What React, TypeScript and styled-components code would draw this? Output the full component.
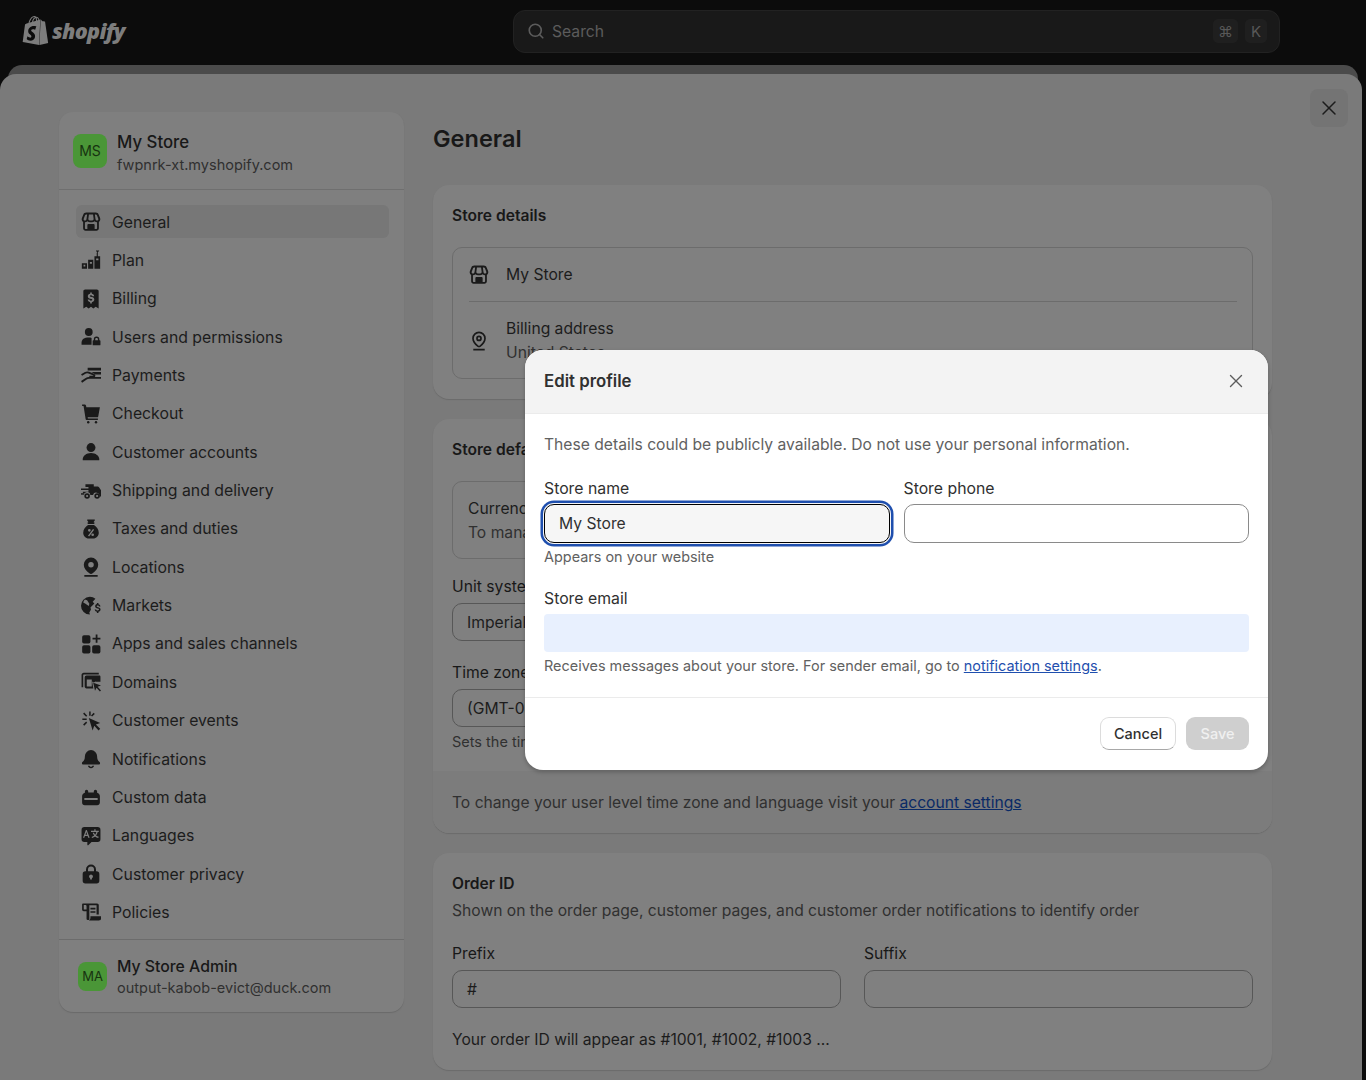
import React from 'react';
import styled, { createGlobalStyle } from 'styled-components';
import { SiShopify } from 'react-icons/si';
import { Search, X } from 'lucide-react';

const GlobalStyle = createGlobalStyle`
  * { box-sizing: border-box; }
  html, body { margin: 0; padding: 0; background: #0c0c0c; }
  body { font-family: Inter, "Noto Sans", sans-serif; color: #181818; }
`;

const Page = styled.div`
  position: relative;
  width: 1366px;
  height: 1080px;
  overflow: hidden;
  display: flex;
  flex-direction: column;
`;

const TopBar = styled.header`
  height: 65px;
  flex: none;
  display: flex;
  align-items: center;
  padding: 0 86px 2px 21px;
`;

const Logo = styled.div`
  width: 492px;
  margin-bottom: 2px;
  display: flex;
  align-items: center;
  gap: 2px;
  color: #7d7d7d;
`;

const LogoWord = styled.span`
  font-family: "Open Sans", sans-serif;
  font-style: italic;
  font-weight: 800;
  font-size: 21.5px;
  letter-spacing: -0.7px;
`;

const SearchBar = styled.div`
  width: 767px;
  height: 43px;
  display: flex;
  align-items: center;
  gap: 7px;
  padding: 0 12px 1px 13px;
  background: #191919;
  border: 1px solid #222;
  border-radius: 12px;
  color: #5c5c5c;
  font-size: 15.7px;
`;

const SearchText = styled.span`
  flex: 1;
`;

const Key = styled.kbd<{ $wide?: boolean }>`
  display: flex;
  align-items: center;
  justify-content: center;
  width: ${p => (p.$wide ? '25px' : '22px')};
  height: 24px;
  border-radius: 5px;
  background: #1f1f1f;
  color: #585858;
  font-family: Inter, "DejaVu Sans", sans-serif;
  font-size: 15px;
`;

const BackSheet = styled.div`
  flex: none;
  height: 24px;
  margin: 0 8px -15px;
  border-radius: 14px 14px 0 0;
  background: #4b4b4b;
`;

const Sheet = styled.main`
  position: relative;
  flex: 1;
  min-height: 0;
  margin-right: 4px;
  padding: 38px 0 0 59px;
  display: flex;
  align-items: flex-start;
  gap: 29px;
  overflow: hidden;
  border-radius: 16px 16px 0 0;
  background: #7a7a7a;
`;

const SheetClose = styled.button`
  position: absolute;
  top: 15px;
  right: 14px;
  width: 38px;
  height: 38px;
  padding: 0;
  display: flex;
  align-items: center;
  justify-content: center;
  border: 0;
  border-radius: 8px;
  background: #747474;
  color: #1c1c1c;
`;

const Sidebar = styled.aside`
  width: 345px;
  height: 900px;
  flex: none;
  display: flex;
  flex-direction: column;
  border-radius: 14px;
  background: #7f7f7f;
  box-shadow: 0 1px 1px #6a6a6a;
`;

const Account = styled.div<{ $footer?: boolean }>`
  display: flex;
  align-items: center;
  gap: 10px;
  height: ${p => (p.$footer ? '73px' : '78px')};
  padding-left: ${p => (p.$footer ? '19px' : '14px')};
  ${p => (p.$footer ? 'border-top: 1px solid #6c6c6c;' : 'border-bottom: 1px solid #6f6f6f;')}
`;

const Avatar = styled.div<{ $small?: boolean }>`
  width: ${p => (p.$small ? '29px' : '34px')};
  height: ${p => (p.$small ? '29px' : '34px')};
  flex: none;
  display: flex;
  align-items: center;
  justify-content: center;
  border-radius: 8px;
  background: #4a9637;
  color: #173310;
  font-size: ${p => (p.$small ? '13px' : '14px')};
`;

const AccountText = styled.div<{ $footer?: boolean }>`
  display: flex;
  flex-direction: column;
  gap: ${p => (p.$footer ? '0' : '2px')};
  margin-top: ${p => (p.$footer ? '2px' : '5px')};
`;

const AccountName = styled.span<{ $footer?: boolean }>`
  font-size: ${p => (p.$footer ? '15.8px' : '16.8px')};
  line-height: 22px;
  font-weight: 500;
  color: #181818;
`;

const AccountMeta = styled.span`
  font-size: 14.5px;
  line-height: 20px;
  color: #303030;
`;

const Nav = styled.nav`
  flex: 1;
  display: flex;
  flex-direction: column;
  gap: 5.36px;
  padding: 15px 15px 0 17px;
`;

const NavItem = styled.a<{ $active?: boolean }>`
  display: flex;
  align-items: center;
  gap: 11px;
  height: 33px;
  padding: 1px 0 0 5px;
  border-radius: 6px;
  font-size: 15.8px;
  color: #1c1c1c;
  background: ${p => (p.$active ? '#777' : 'transparent')};
`;

const Icon = styled.svg`
  width: 20px;
  height: 20px;
  flex: none;
  fill: #1a1a1a;
  stroke: none;
`;

const Content = styled.div`
  width: 839px;
  flex: none;
  display: flex;
  flex-direction: column;
  gap: 20px;
`;

const PageTitle = styled.h1`
  height: 53px;
  margin: 0;
  padding-top: 11px;
  font-size: 23.5px;
  line-height: 32px;
  font-weight: 600;
  color: #181818;
`;

const Card = styled.section`
  border-radius: 16px;
  background: #808080;
  box-shadow: 0 1px 1px #6b6b6b;
  overflow: hidden;
`;

const CardBody = styled.div<{ $bottom: number }>`
  padding: 19px 19px ${p => p.$bottom}px;
`;

const CardTitle = styled.h2`
  margin: 0;
  font-size: 15.6px;
  line-height: 24px;
  font-weight: 600;
  color: #181818;
`;

const CardText = styled.p<{ $muted?: boolean; $small?: boolean }>`
  margin: 0;
  font-size: ${p => (p.$small ? '14.5px' : '15.65px')};
  line-height: 24px;
  color: ${p => (p.$muted ? '#303030' : '#1c1c1c')};
`;

const Description = styled(CardText)`
  margin-top: 3px;
`;

const HelpLine = styled(CardText)`
  margin-top: 3px;
`;

const InsetBox = styled.div`
  margin-top: 19px;
  padding: 0 15px 0 16px;
  border: 1px solid #6c6c6c;
  border-radius: 10px;
`;

const InsetRow = styled.div<{ $tall?: boolean; $divider?: boolean }>`
  display: flex;
  align-items: center;
  gap: 17px;
  padding-top: 1px;
  height: ${p => (p.$tall ? '76px' : '54px')};
  ${p => p.$divider && 'border-bottom: 1px solid #6c6c6c;'}
`;

const Stack = styled.div`
  display: flex;
  flex-direction: column;
`;

const CurrencyBox = styled.div`
  margin-top: 19px;
  height: 78px;
  padding: 15px 15px 0;
  border: 1px solid #6c6c6c;
  border-radius: 10px;
`;

const Field = styled.div<{ $gap: number }>`
  display: flex;
  flex-direction: column;
  margin-top: ${p => p.$gap}px;
`;

const FieldLabel = styled.label`
  font-size: 15.7px;
  line-height: 24px;
  margin-bottom: 4px;
  color: #181818;
`;

const GhostInput = styled.div`
  height: 38px;
  display: flex;
  align-items: center;
  padding: 0 14px;
  border: 1px solid #575757;
  border-radius: 10px;
  font-size: 15.7px;
  color: #1c1c1c;
`;

const CardFooter = styled.div`
  height: 62px;
  display: flex;
  align-items: center;
  padding: 2px 19px 0;
  background: #7c7c7c;
`;

const DimLink = styled.a`
  color: #0a2a66;
  text-decoration: underline;
`;

const FieldGrid = styled.div`
  display: grid;
  grid-template-columns: 389px 389px;
  gap: 23px;
`;

const Modal = styled.div`
  position: absolute;
  top: 350px;
  left: 525px;
  width: 743px;
  height: 420px;
  display: flex;
  flex-direction: column;
  overflow: hidden;
  border-radius: 18px;
  background: #fff;
  box-shadow: 0 2px 4px rgba(0, 0, 0, 0.25);
`;

const ModalHeader = styled.div`
  height: 64px;
  flex: none;
  display: flex;
  align-items: center;
  justify-content: space-between;
  padding: 0 21px 2px 19px;
  background: #f3f3f3;
  border-bottom: 1px solid #ebebeb;
`;

const ModalTitle = styled.h2`
  margin: 0;
  font-size: 16.8px;
  font-weight: 600;
  color: #303030;
`;

const ModalBody = styled.div`
  flex: 1;
  padding: 19px 19px 0;
  display: flex;
  flex-direction: column;
`;

const Lead = styled.p`
  margin: 0 0 20px;
  font-size: 15.65px;
  line-height: 24px;
  color: #616161;
`;

const TwoCol = styled.div`
  display: grid;
  grid-template-columns: 1fr 1fr;
  column-gap: 14px;
`;

const ModalLabel = styled.label`
  display: block;
  height: 24px;
  margin-bottom: 3px;
  font-size: 15.8px;
  line-height: 24px;
  color: #303030;
`;

const TextBox = styled.input<{ $focused?: boolean }>`
  width: 100%;
  height: 39px;
  padding: 0 14px;
  outline: none;
  font-family: inherit;
  font-size: 15.7px;
  color: #303030;
  border-radius: 10px;
  background: ${p => (p.$focused ? '#f6f6f6' : '#fff')};
  border: 1px solid ${p => (p.$focused ? '#000' : '#8a8a8a')};
  ${p => p.$focused && 'box-shadow: 0 0 0 1px #f6f6f6, 0 0 0 3.5px #1f4fae;'}
`;

const EmailBox = styled.input`
  width: 100%;
  height: 38px;
  display: block;
  margin-top: 3px;
  border: 0;
  outline: none;
  border-radius: 4px;
  background: #e8f0fe;
`;

const Help = styled.div`
  font-size: 14.45px;
  line-height: 20px;
  margin-top: 4px;
  color: #616161;
`;

const ModalLink = styled.a`
  color: #1f4fae;
  text-decoration: underline;
`;

const EmailField = styled.div`
  margin-top: 20px;
`;

const ModalFooter = styled.div`
  height: 73px;
  flex: none;
  display: flex;
  align-items: center;
  justify-content: flex-end;
  gap: 10px;
  padding: 0 19px 2px;
  border-top: 1px solid #ebebeb;
`;

const Button = styled.button<{ $primary?: boolean }>`
  height: 33px;
  padding: 0;
  font-family: inherit;
  font-size: 14.5px;
  font-weight: 500;
  border-radius: 9px;
  ${p =>
    p.$primary
      ? 'border: 0; background: #cfcfcf; color: #f0f0f0; width: 63px;'
      : 'border: 1px solid #dcdcdc; border-bottom-color: #a8a8a8; background: #fff; color: #303030; width: 76px;'}
`;

const ModalClose = styled.span`
  display: flex;
  color: #5c5c5c;
`;

const StoreIcon = () => (
  <Icon viewBox="2 2 16 16.500">
    <path fillRule="evenodd" d="M6 2.500h8c1 0 1.900.6 2.300 1.500l1.200 3c.5 1.400-.1 2.600-1 3.200v5.300c0 1.100-.9 2-2 2h-9c-1.100 0-2-.9-2-2v-5.300c-.9-.6-1.500-1.800-1-3.200l1.200-3C4.100 3.100 5 2.500 6 2.500ZM6 4c-.4 0-.7.200-.9.600L4 7.500c-.3.800.3 1.500 1 1.500.8 0 1.300-.6 1.300-1.300L6.800 4H6Zm2.300 0-.5 3.700c0 .8.900 1.300 2.200 1.300s2.200-.5 2.200-1.300L11.700 4H8.300Zm4.900 0 .5 3.700c0 .7.500 1.300 1.300 1.300.7 0 1.300-.7 1-1.500l-1.100-2.900c-.2-.4-.5-.6-.9-.6h-.8ZM5 10.500v5c0 .3.200.5.500.5H7v-3c0-.6.400-1 1-1h4c.6 0 1 .4 1 1v3h1.500c.3 0 .5-.2.500-.5v-5c-.8 0-1.500-.3-2-.9-.7.600-1.800.9-3 .9s-2.300-.3-3-.9c-.5.600-1.200.9-2 .9Z" />
  </Icon>
);

const PinOutlineIcon = () => (
  <Icon viewBox="2 1.500 16 17.500">
    <path fillRule="evenodd" d="M10 2a6 6 0 0 1 6 6c0 2.700-2 5.400-4.500 7.300-.9.700-2.100.7-3 0C6 13.400 4 10.700 4 8a6 6 0 0 1 6-6Zm0 1.500A4.500 4.500 0 0 0 5.500 8c0 2 1.600 4.300 3.900 6.100.4.300.8.300 1.200 0C12.900 12.300 14.500 10 14.500 8A4.500 4.500 0 0 0 10 3.500Zm0 2a2.500 2.500 0 1 1 0 5 2.500 2.500 0 0 1 0-5ZM10 7a1 1 0 1 0 0 2 1 1 0 0 0 0-2ZM5 17h10v1.500H5z" />
  </Icon>
);

const icons: Record<string, React.ReactNode> = {
  store: <StoreIcon />,
  plan: (
    <Icon viewBox="1.500 1 17 17.500">
      <path d="M14.200 1.500h3l-1.500 2.200zM15 3.500h1v3h-1zM13 6.500h5v11h-5zM7.500 9.500H12v8H7.500zM2 12.500h4.500v5H2z" />
      <path d="M14.500 8.500h2V10h-2zM9 11.500h1.800V13H9zM3.500 14H5v1.500H3.500z" fill="#808080" />
    </Icon>
  ),
  billing: (
    <Icon viewBox="1.500 1.500 17 17">
      <path fillRule="evenodd" d="M5 2h10c.8 0 1.500.7 1.500 1.500V18L14 16.500 12 18l-2-1.500L8 18l-2-1.500L3.500 18V3.500C3.500 2.700 4.200 2 5 2Zm4.300 2.500v1.100c-1.200.2-2 1-2 2.100 0 1.200.9 1.800 2 2.100l1.100.3c.5.100.7.3.7.6 0 .4-.4.7-1.100.7-.8 0-1.200-.3-1.300-.9H7.200c.1 1.200.9 2 2.100 2.200v1.100h1.400v-1.100c1.300-.2 2.100-1 2.100-2.200 0-1.200-.9-1.800-2-2.100l-1.100-.3c-.5-.1-.7-.3-.7-.6 0-.4.400-.7 1-.7.700 0 1.100.3 1.200.8h1.500c-.1-1.100-.9-1.900-2-2.100V4.500H9.300Z" />
    </Icon>
  ),
  users: (
    <Icon viewBox="1 1.500 18 17">
      <circle cx="8" cy="5.500" r="3.500" />
      <path d="M1.500 17v-2c0-2.800 2.500-4.500 6.500-4.500 1 0 1.800.1 2.500.3V17z" />
      <path fillRule="evenodd" d="M15 9.500a2.500 2.500 0 0 1 2.500 2.500v1h.5c.3 0 .5.200.5.500V17c0 .3-.2.500-.5.500h-6a.5.500 0 0 1-.5-.5v-3.500c0-.3.200-.5.500-.5h.5v-1A2.500 2.500 0 0 1 15 9.500Zm0 1.300c-.7 0-1.200.5-1.200 1.200v1h2.400v-1c0-.7-.5-1.200-1.200-1.200Z" />
    </Icon>
  ),
  payments: (
    <Icon viewBox="1 1.500 18 17">
      <path d="M7 3.500h12V6H7zM10.500 7.200H19v2.300h-5z" />
      <path d="M1.500 10 5 8c1-.5 2-.5 3-.1l4.500 1.700c1 .4.700 1.900-.4 1.900H8.500" fill="none" stroke="#1a1a1a" strokeWidth="1.700" />
      <path d="M1.500 16.200 6 13.200c.7-.5 1.400-.6 2.200-.6H19" fill="none" stroke="#1a1a1a" strokeWidth="1.700" />
    </Icon>
  ),
  cart: (
    <Icon viewBox="1 1.500 18 18">
      <path d="M2 2h2.300c.6 0 1 .4 1.200.9l.3 1.600H18l-1.500 8.200c-.1.500-.5.800-1 .8H7l.2 1h9v1.300H6c-.4 0-.7-.3-.8-.6L3.300 3.300H2z" />
      <circle cx="7.500" cy="18" r="1.100" />
      <circle cx="14.500" cy="18" r="1.100" />
    </Icon>
  ),
  person: (
    <Icon viewBox="1 1 18 18">
      <circle cx="10" cy="6" r="4" />
      <path d="M3 17.500c-.3 0-.5-.2-.5-.5 0-3.500 3.300-6 7.500-6s7.500 2.500 7.500 6c0 .3-.2.500-.5.500z" />
    </Icon>
  ),
  shipping: (
    <Icon viewBox="1 1.500 18 17">
      <path fillRule="evenodd" d="M5 4h7.500v2H16c.5 0 .9.200 1.200.6l2 3c.2.200.3.500.3.800V14c0 .6-.4 1-1 1h-.9a3 3 0 0 0-5.800-1.500H9.400A3 3 0 0 0 6.500 11c-.7 0-1.200.2-1.800.6V12h-2v-1.300h5V9.200h-7V7.700h7V6.300H5z" />
      <path fillRule="evenodd" d="M6.500 12a2.500 2.500 0 1 1 0 5 2.500 2.500 0 0 1 0-5Zm0 1.500a1 1 0 1 0 0 2 1 1 0 0 0 0-2ZM15.500 12a2.500 2.500 0 1 1 0 5 2.500 2.500 0 0 1 0-5Zm0 1.500a1 1 0 1 0 0 2 1 1 0 0 0 0-2Z" />
      <path d="M1 12h2.800v1.300H1z" />
    </Icon>
  ),
  taxes: (
    <Icon viewBox="1.500 1 17 18">
      <path fillRule="evenodd" d="M7 1.500h6c.4 0 .6.500.4.800L12.200 4h.8v1.500H7V4h.8L6.600 2.300c-.2-.3 0-.8.400-.8Zm.3 5h5.400C15 8 17 10.500 17 13.300c0 2.800-2.200 5.200-5 5.200H8c-2.800 0-5-2.400-5-5.200C3 10.500 5 8 7.300 6.500Zm4.500 3.500-4.500 6 1 .7 4.500-6ZM8.500 10a1.200 1.200 0 1 0 0 2.400 1.200 1.200 0 0 0 0-2.400Zm3 4a1.200 1.200 0 1 0 0 2.400 1.200 1.200 0 0 0 0-2.400Z" />
    </Icon>
  ),
  location: (
    <Icon viewBox="1 1 18 18">
      <path fillRule="evenodd" d="M10 1.500A6.500 6.500 0 0 1 16.500 8c0 3-2.300 5.700-5 7.700-.9.700-2.100.7-3 0-2.700-2-5-4.700-5-7.700A6.500 6.500 0 0 1 10 1.500Zm0 4a2.500 2.500 0 1 0 0 5 2.500 2.500 0 0 0 0-5ZM4 17.300h12v1.400H4z" />
    </Icon>
  ),
  markets: (
    <Icon viewBox="1 1.500 18 17.500">
      <path d="M9 2a8 8 0 0 1 5 1.800L11.500 6.500 13 8l-3.500 3.500.5 2-1.500 2.500.5 2H9A8 8 0 0 1 9 2ZM3 7c1 .5 2.500 1 3 2l2 1.200.5-2L6.500 5l-2-.5C3.800 5.200 3.300 6 3 7Z" />
      <path d="M15.300 7.500h1.400v1.100c1 .2 1.800 1 1.800 2h-1.400c0-.4-.5-.8-1-.8-.6 0-1 .3-1 .7 0 .5.500.6 1.200.8 1.200.3 2.300.7 2.300 2.100 0 1-.7 1.800-1.900 2v1.100h-1.400v-1.100c-1.100-.2-1.900-1-2-2.100h1.400c.1.500.6.900 1.300.9s1.200-.3 1.200-.8-.5-.7-1.300-.9c-1.100-.3-2.200-.7-2.200-2 0-1 .7-1.800 1.600-2z" />
    </Icon>
  ),
  apps: (
    <Icon viewBox="1.500 1.500 17 17">
      <rect x="2.500" y="2.500" width="7" height="7" rx="1.500" />
      <rect x="2.500" y="11" width="7" height="7" rx="1.500" />
      <rect x="11" y="11" width="7" height="7" rx="1.500" />
      <path d="M14 2h1.500v2.700H18v1.500h-2.500V9H14V6.200h-2.700V4.700H14z" />
    </Icon>
  ),
  domains: (
    <Icon viewBox="1 1.500 18 17.500">
      <path d="M1.500 4c0-1.100.9-2 2-2H17v1.500H3.500c-.3 0-.5.200-.5.500v11H1.500z" />
      <path fillRule="evenodd" d="M6 4.500h11.500c.6 0 1 .4 1 1V10h-4.200l-.3-.2-1.500.8-1.500-.7L12.100 16H6c-1 0-1.700-.7-1.700-1.700V6.200c0-1 .7-1.700 1.700-1.700Zm.2 3.600v6c0 .2.100.3.300.3h4.200V8.100Z" />
      <path d="M12 11l7 2.500-3 1.100 3 3.400-1 .8-3-3.400-1.400 2.800z" />
    </Icon>
  ),
  events: (
    <Icon viewBox="1 1 18 18.500">
      <path d="M8 7.500 18.500 12l-4 1.400 4 4.100-1.500 1.500-4-4.300-1.500 4.300z" />
      <path d="M8.300 1.500h1.400v4H8.300zM2 8h4v1.400H2zM2.700 3.500l1-1 2.800 2.800-1 1zM5.500 10.800l1 1-2.800 2.800-1-1zM12.500 2.700l1 1L11 6.200l-1-1z" />
    </Icon>
  ),
  bell: (
    <Icon viewBox="1 1 18 18">
      <path d="M10 2a5.500 5.500 0 0 1 5.500 5.500c0 2.500.7 4 2.200 5.300.9.800.4 2.200-.8 2.200H3.100c-1.200 0-1.700-1.400-.8-2.200C3.800 11.500 4.500 10 4.500 7.500A5.500 5.500 0 0 1 10 2Z" />
      <path d="M7.200 16h1.500c.2.600.7 1 1.300 1s1.100-.4 1.300-1h1.500c-.3 1.400-1.400 2.300-2.800 2.300S7.500 17.400 7.200 16z" />
    </Icon>
  ),
  data: (
    <Icon viewBox="1 1.500 18 17">
      <path fillRule="evenodd" d="M6 3.500A1.500 1.500 0 0 1 7.500 5v1h5V5a1.500 1.500 0 0 1 3 0v1.100c1.400.3 2.500 1.600 2.500 3.100V15c0 1.400-1.100 2.500-2.500 2.500h-11A2.500 2.500 0 0 1 2 15V9.200c0-1.500 1.100-2.800 2.500-3.100V5A1.500 1.500 0 0 1 6 3.500ZM4 11v1.800h12V11z" />
    </Icon>
  ),
  languages: (
    <Icon viewBox="1 1.500 18 18">
      <path d="M4 2.500h12A2.500 2.500 0 0 1 18.500 5v8.500A2.500 2.500 0 0 1 16 16h-5.500l-3 2.800c-.3.300-.8 0-.8-.4V16H4a2.500 2.500 0 0 1-2.500-2.500V5A2.500 2.500 0 0 1 4 2.500Z" />
      <path d="M6.200 5l2.600 7H7.500L7 10.500H4.500L4 12H2.800l2.600-7zM6.600 9.400l-.8-2.600L5 9.400zM13 4.500h1.100v1.300H17V7h-1c-.3 1.300-.8 2.300-1.500 3.100.7.500 1.500.9 2.500 1.100l-.5 1.100c-1.100-.3-2-.8-2.800-1.400-.7.600-1.600 1-2.700 1.400l-.5-1c1-.3 1.800-.7 2.400-1.200-.6-.7-1.100-1.600-1.400-2.600h1.200c.2.700.6 1.300 1 1.800.5-.6.900-1.300 1.100-2.300H10V5.800h3z" fill="#808080" />
    </Icon>
  ),
  lock: (
    <Icon viewBox="1 1 18 18">
      <path fillRule="evenodd" d="M10 1.500A4.500 4.500 0 0 1 14.500 6v1.500h.5a2.500 2.500 0 0 1 2.500 2.500v6a2.500 2.500 0 0 1-2.500 2.500H5A2.500 2.500 0 0 1 2.500 16v-6A2.500 2.500 0 0 1 5 7.500h.5V6A4.500 4.500 0 0 1 10 1.500Zm0 1.800A2.700 2.700 0 0 0 7.300 6v1.500h5.400V6A2.700 2.700 0 0 0 10 3.300Zm0 7.200a1.800 1.800 0 0 0-.8 3.400V15h1.600v-1.100a1.800 1.800 0 0 0-.8-3.400Z" />
    </Icon>
  ),
  policies: (
    <Icon viewBox="1 1.500 18 16.500">
      <path fillRule="evenodd" d="M3 2h12.500c.8 0 1.500.7 1.500 1.500V12h-2V3.700H8.400c.1.300.1.500.1.800V16c0 .6-.4 1-1 1s-1.500-.4-1.500-1V9H3.500C2.700 9 2 8.300 2 7.500V3c0-.6.400-1 1-1Zm.5 1.500v4H6v-3c0-.6-.4-1-1-1ZM9.500 6H14v1.500H9.500zm0 3H14v1.500H9.500z" />
      <path d="M9.500 13.500h10v1c0 1.500-1 2.800-2.500 2.800H8.200c.8-.5 1.300-1.300 1.300-2.300z" />
    </Icon>
  ),
};

const navItems: [string, string][] = [
  ['store', 'General'],
  ['plan', 'Plan'],
  ['billing', 'Billing'],
  ['users', 'Users and permissions'],
  ['payments', 'Payments'],
  ['cart', 'Checkout'],
  ['person', 'Customer accounts'],
  ['shipping', 'Shipping and delivery'],
  ['taxes', 'Taxes and duties'],
  ['location', 'Locations'],
  ['markets', 'Markets'],
  ['apps', 'Apps and sales channels'],
  ['domains', 'Domains'],
  ['events', 'Customer events'],
  ['bell', 'Notifications'],
  ['data', 'Custom data'],
  ['languages', 'Languages'],
  ['lock', 'Customer privacy'],
  ['policies', 'Policies'],
];

export default function App() {
  return (
    <Page>
      <GlobalStyle />
      <TopBar>
        <Logo>
          <SiShopify size={29} />
          <LogoWord>shopify</LogoWord>
        </Logo>
        <SearchBar>
          <Search size={18} strokeWidth={2.2} />
          <SearchText>Search</SearchText>
          <Key $wide>⌘</Key>
          <Key>K</Key>
        </SearchBar>
      </TopBar>
      <BackSheet />
      <Sheet>
        <SheetClose>
          <X size={24} strokeWidth={1.5} />
        </SheetClose>
        <Sidebar>
          <Account>
            <Avatar>MS</Avatar>
            <AccountText>
              <AccountName>My Store</AccountName>
              <AccountMeta>fwpnrk-xt.myshopify.com</AccountMeta>
            </AccountText>
          </Account>
          <Nav>
            {navItems.map(([icon, label], i) => (
              <NavItem key={label} $active={i === 0}>
                {icons[icon]}
                {label}
              </NavItem>
            ))}
          </Nav>
          <Account $footer>
            <Avatar $small>MA</Avatar>
            <AccountText $footer>
              <AccountName $footer>My Store Admin</AccountName>
              <AccountMeta>output-kabob-evict@duck.com</AccountMeta>
            </AccountText>
          </Account>
        </Sidebar>
        <Content>
          <PageTitle>General</PageTitle>
          <Card>
            <CardBody $bottom={20}>
              <CardTitle>Store details</CardTitle>
              <InsetBox>
                <InsetRow $divider>
                  <StoreIcon />
                  <CardText>My Store</CardText>
                </InsetRow>
                <InsetRow $tall>
                  <PinOutlineIcon />
                  <Stack>
                    <CardText>Billing address</CardText>
                    <CardText $muted>United States</CardText>
                  </Stack>
                </InsetRow>
              </InsetBox>
            </CardBody>
          </Card>
          <Card>
            <CardBody $bottom={17}>
              <CardTitle>Store defaults</CardTitle>
              <CurrencyBox>
                <CardText>Currency display</CardText>
                <CardText $muted>To manage currencies</CardText>
              </CurrencyBox>
              <Field $gap={16}>
                <FieldLabel>Unit system</FieldLabel>
                <GhostInput>Imperial system</GhostInput>
              </Field>
              <Field $gap={20}>
                <FieldLabel>Time zone</FieldLabel>
                <GhostInput>(GMT-05:00) Eastern Time</GhostInput>
                <HelpLine $muted $small>Sets the time for when orders and analytics are recorded</HelpLine>
              </Field>
            </CardBody>
            <CardFooter>
              <CardText $muted>
                To change your user level time zone and language visit your{' '}
                <DimLink>account settings</DimLink>
              </CardText>
            </CardFooter>
          </Card>
          <Card>
            <CardBody $bottom={18}>
              <CardTitle>Order ID</CardTitle>
              <Description $muted>Shown on the order page, customer pages, and customer order notifications to identify order</Description>
              <FieldGrid>
                <Field $gap={19}>
                  <FieldLabel>Prefix</FieldLabel>
                  <GhostInput>#</GhostInput>
                </Field>
                <Field $gap={19}>
                  <FieldLabel>Suffix</FieldLabel>
                  <GhostInput />
                </Field>
              </FieldGrid>
              <Field $gap={20}>
                <CardText>Your order ID will appear as #1001, #1002, #1003 ...</CardText>
              </Field>
            </CardBody>
          </Card>
        </Content>
      </Sheet>
      <Modal>
        <ModalHeader>
          <ModalTitle>Edit profile</ModalTitle>
          <ModalClose>
            <X size={22} strokeWidth={1.5} />
          </ModalClose>
        </ModalHeader>
        <ModalBody>
          <Lead>These details could be publicly available. Do not use your personal information.</Lead>
          <TwoCol>
            <div>
              <ModalLabel>Store name</ModalLabel>
              <TextBox $focused defaultValue="My Store" />
              <Help>Appears on your website</Help>
            </div>
            <div>
              <ModalLabel>Store phone</ModalLabel>
              <TextBox />
            </div>
          </TwoCol>
          <EmailField>
            <ModalLabel>Store email</ModalLabel>
            <EmailBox />
            <Help>
              Receives messages about your store. For sender email, go to{' '}
              <ModalLink>notification settings</ModalLink>.
            </Help>
          </EmailField>
        </ModalBody>
        <ModalFooter>
          <Button>Cancel</Button>
          <Button $primary>Save</Button>
        </ModalFooter>
      </Modal>
    </Page>
  );
}
